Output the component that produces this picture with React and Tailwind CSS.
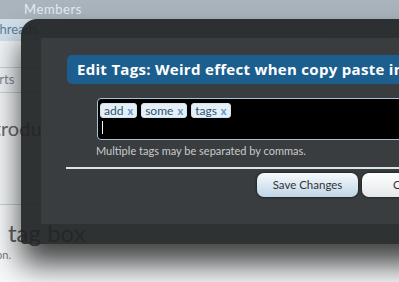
import React from "react";

export default function App() {
  const font = { fontFamily: "Lato, 'Liberation Sans', sans-serif" };
  return (
    <div className="relative w-[399px] h-[282px] overflow-hidden bg-[#f7f9fa]" style={font}>
      {/* page behind */}
      <div className="h-[19px] bg-[#a9b4bc] flex items-center pl-[24px] text-[13px] tracking-[0.6px] text-[#e6ecf0]">Members</div>
      <div className="h-[22px] bg-[#d2dfe9] flex items-center">
        <span className="ml-[-8px] text-[13px] text-[#5b7f9c]">Threads</span>
      </div>
      <div className="h-[15px] flex justify-end pr-[2px] bg-[#f1f5f8]">
        <div className="w-[66px] h-[15px] mt-[-3px] border border-[#8fa0ad] bg-white text-[11px] text-[#888] pl-[4px] leading-[13px]">Search</div>
      </div>
      <div className="h-[12px] border-b border-[#c9d3da] bg-[#f1f5f8]" />
      <div className="h-[25px] border-b border-[#c9d3da] bg-[#f1f5f8] flex items-center">
        <span className="ml-[-30px] text-[13px] text-[#7a8a96]">Reports</span>
      </div>
      <div className="h-[112px] bg-[#f3f6f8] border-b border-[#c9d3da] pt-[20px]">
        <span className="block ml-[-22px] text-[20px] text-[#6b6b6b] whitespace-nowrap">introduce the problem</span>
      </div>
      <div className="pt-[14px] pl-[8px] text-[24px] text-[#5f5f5f] leading-[28px]">tag box</div>
      <div className="ml-[-4px] text-[11px] text-[#777]">on.</div>

      {/* overlay */}
      <div className="absolute left-[21px] top-[19px] w-[430px] h-[225px] rounded-tl-[16px] rounded-bl-[3px] bg-[rgba(31,34,36,0.93)] pt-[19px] pb-[20px] pl-[20px] shadow-[0_20px_30px_rgba(0,0,0,0.75)]">
        <div className="h-full bg-[rgba(60,62,64,0.9)] pl-[26px] pt-[17px]">
          <div
            className="h-[29px] rounded-l-[5px] bg-[#1c5e8d] pl-[10px] flex items-center text-white font-bold text-[15px] tracking-[0.3px] whitespace-nowrap overflow-hidden"
            style={{ fontFamily: "'Open Sans', Lato, sans-serif" }}
          >
            Edit Tags: Weird effect when copy paste in tag box
          </div>
          <div className="ml-[30px] mt-[14px] h-[42px] border border-[#a6c1d4] rounded-[4px] bg-black pl-[2px] pt-[4px]">
            <div className="flex gap-[4px]">
              {["add", "some", "tags"].map((t) => (
                <span key={t} className="shrink-0 h-[15px] px-[3px] rounded-[3px] bg-[#e5eff7] border border-[#d3e3ef] flex items-center gap-[4px] text-[12px] text-[#2b5473] leading-none">
                  {t}
                  <span className="text-[11px] font-bold text-[#5e93c3]">x</span>
                </span>
              ))}
            </div>
            <div className="ml-[2px] mt-[3px] w-[1px] h-[13px] bg-white" />
          </div>
          <div className="ml-[29px] mt-[4px] text-[11px] leading-[14px] text-[#c9cbcc]">Multiple tags may be separated by commas.</div>
          <div className="ml-[-1px] mt-[9px] h-[2px] bg-[#dde4e8]" />
          <div className="flex gap-[4px] pl-[190px] mt-[4px]">
            <div className="shrink-0 w-[101px] h-[24px] rounded-[7px] bg-gradient-to-b from-[#f6f9fc] to-[#bfd6e8] shadow-[0_0_3px_rgba(0,0,0,0.8)] flex items-center justify-center text-[11.5px] text-[#333]">Save Changes</div>
            <div className="shrink-0 w-[100px] h-[24px] rounded-[7px] bg-gradient-to-b from-[#ffffff] to-[#e4e7ea] shadow-[0_0_3px_rgba(0,0,0,0.8)] flex items-center pl-[31px] text-[11.5px] text-[#333]">Cancel</div>
          </div>
        </div>
      </div>
    </div>
  );
}
